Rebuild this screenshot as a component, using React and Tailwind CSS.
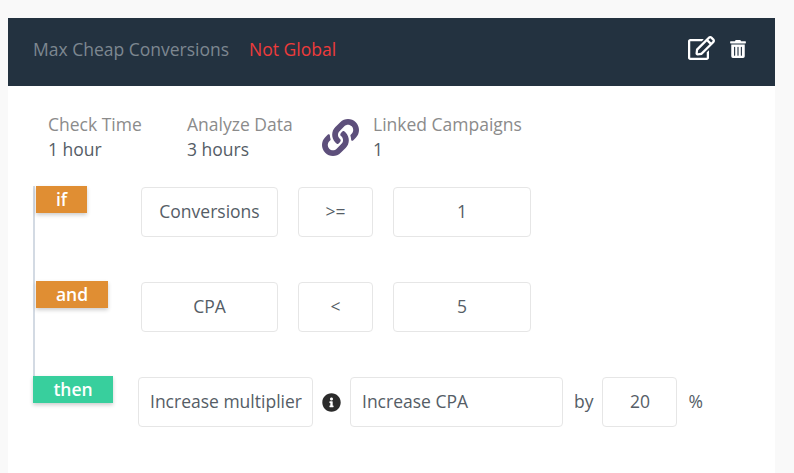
import React from "react";
import { FaRegEdit, FaTrashAlt, FaLink, FaInfoCircle } from "react-icons/fa";

const Box = ({ w, left, children, className = "" }) => (
  <div
    className={`h-[50px] shrink-0 flex items-center pb-[2px] bg-white border border-[#e6e6e6] rounded-[4px] text-[#555d66] text-[17.5px] ${left ? "pl-[11px]" : "justify-center"} ${w} ${className}`}
  >
    {children}
  </div>
);

const Stat = ({ label, value, className = "" }) => (
  <div className={`leading-[25px] text-[17.5px] ${className}`}>
    <div className="text-[#8b8b8b]">{label}</div>
    <div className="text-[#555d66]">{value}</div>
  </div>
);

const Tag = ({ color, w, children }) => (
  <div
    className={`h-[27px] shrink-0 flex items-center justify-center text-white font-semibold text-[17.5px] shadow-[0_2px_4px_rgba(0,0,0,0.2)] ${color} ${w}`}
  >
    {children}
  </div>
);

export default function App() {
  return (
    <div
      className="h-[473px] overflow-hidden bg-[#f9f9f9] pt-[18px] pl-[8px] pr-[19px]"
      style={{ fontFamily: '"Open Sans", sans-serif' }}
    >
      <div className="h-[455px] bg-white">
        <div className="h-[68px] bg-[#233240] flex items-center pl-[25px] pr-[29px] pb-[6px] text-[17.5px]">
          <span className="text-[#7d8790]">Max Cheap Conversions</span>
          <span className="ml-[20px] text-[#ee3b3b]">Not Global</span>
          <div className="ml-auto flex items-center gap-[15px] text-white">
            <FaRegEdit className="w-[27px] h-[24px] mb-[2px]" />
            <FaTrashAlt className="w-[16px] h-[18px]" />
          </div>
        </div>

        <div className="flex items-center pt-[26px] pl-[40px]">
          <Stat label="Check Time" value="1 hour" className="w-[139px]" />
          <Stat label="Analyze Data" value="3 hours" className="w-[135px]" />
          <FaLink className="w-[37px] h-[37px] text-[#5d4f7b] mr-[14px]" />
          <Stat label="Linked Campaigns" value="1" />
        </div>

        <div className="ml-[25px] mt-[24px] w-fit border-l-2 border-[#d3dae3]">
          <div className="flex items-start pl-px">
            <Tag color="bg-[#e08e33]" w="w-[51px]">if</Tag>
            <div className="flex gap-[20px] ml-[54px] mt-px">
              <Box w="w-[137px]">Conversions</Box>
              <Box w="w-[75px]">&gt;=</Box>
              <Box w="w-[138px]">1</Box>
            </div>
          </div>
          <div className="flex items-start pl-px pt-[44px] pb-[45px]">
            <Tag color="bg-[#e08e33]" w="w-[72px]">and</Tag>
            <div className="flex gap-[20px] ml-[33px] mt-px">
              <Box w="w-[137px]">CPA</Box>
              <Box w="w-[75px]">&lt;</Box>
              <Box w="w-[138px]">5</Box>
            </div>
          </div>
        </div>

        <div className="flex items-start ml-[25px] -mt-px">
          <Tag color="bg-[#38cf9d]" w="w-[80px]">then</Tag>
          <div className="flex items-center ml-[25px] mt-px">
            <Box w="w-[175px]" left>Increase multiplier</Box>
            <FaInfoCircle className="w-[19px] h-[19px] text-[#2b2b2b] ml-[9px] mr-[9px]" />
            <Box w="w-[213px]" left>Increase CPA</Box>
            <span className="text-[17.5px] text-[#555d66] ml-[11px] pb-[2px]">by</span>
            <Box w="w-[75px]" className="ml-[9px]">20</Box>
            <span className="text-[17.5px] text-[#555d66] ml-[11px] pb-[2px]">%</span>
          </div>
        </div>
      </div>
    </div>
  );
}
